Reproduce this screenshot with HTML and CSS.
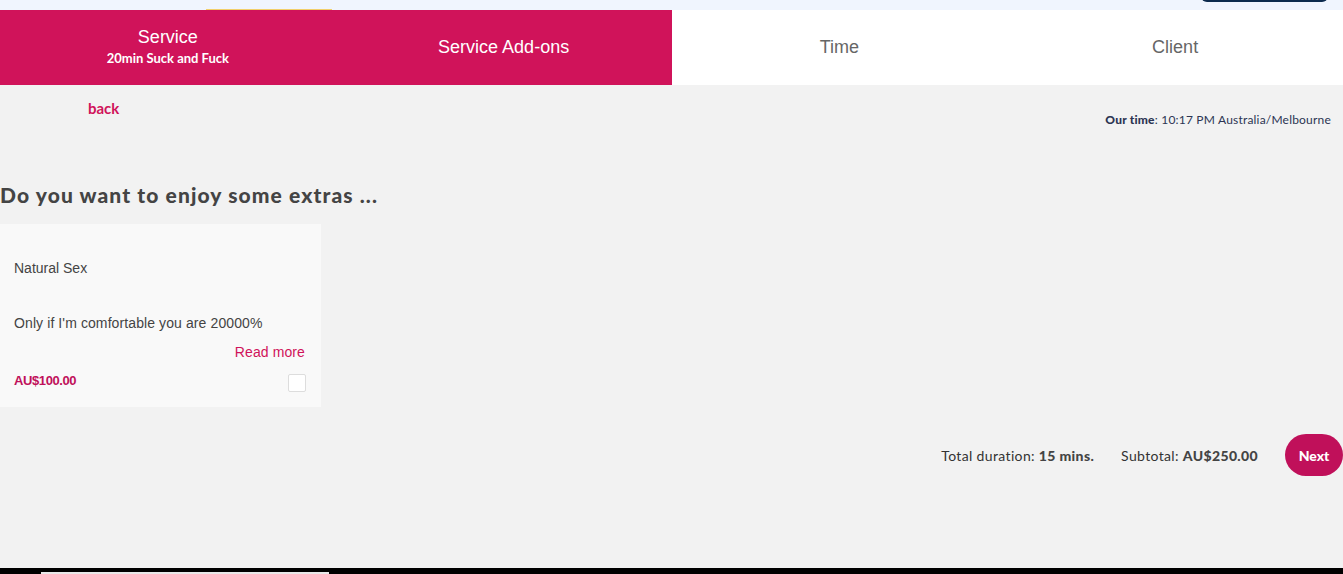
FILE: index.html
```html
<!DOCTYPE html>
<html>
<head>
<meta charset="utf-8">
<link rel="stylesheet" href="styles.css">
</head>
<body>
<div class="page">
  <div class="topbar">
    <div class="topbar-accent"></div>
    <div class="topbar-btn"></div>
  </div>
  <nav class="tabs">
    <div class="tab active">
      <span class="tab-title">Service</span>
      <span class="tab-sub">20min Suck and Fuck</span>
    </div>
    <div class="tab active"><span class="tab-title single">Service Add-ons</span></div>
    <div class="tab"><span class="tab-title single">Time</span></div>
    <div class="tab"><span class="tab-title single">Client</span></div>
  </nav>
  <main class="main">
    <div class="meta-row">
      <a class="back" href="#">back</a>
      <div class="our-time"><b>Our time</b>: 10:17 PM Australia/Melbourne</div>
    </div>
    <h2 class="heading">Do you want to enjoy some extras ...</h2>
    <div class="card">
      <div class="card-name">Natural Sex</div>
      <div class="card-desc">Only if I'm comfortable you are 20000%</div>
      <a class="read-more" href="#">Read more</a>
      <div class="card-foot">
        <span class="price">AU$100.00</span>
        <span class="checkbox"></span>
      </div>
    </div>
    <div class="summary">
      <span class="sum-item">Total duration: <b>15 mins.</b></span>
      <span class="sum-item">Subtotal: <b>AU$250.00</b></span>
      <button class="next">Next</button>
    </div>
  </main>
  <div class="bottombar"><div class="bottombar-tab"></div></div>
</div>
</body>
</html>
```

FILE: styles.css
```css
* { box-sizing: border-box; }
html, body { margin: 0; padding: 0; }
body {
  background: #f2f2f2;
  font-family: "Liberation Sans", Arial, sans-serif;
  overflow: hidden;
}
.page {
  height: 574px;
  display: flex;
  flex-direction: column;
}
.topbar {
  height: 10px;
  background: #f0f5fe;
  position: relative;
  flex: none;
}
.topbar-accent {
  position: absolute;
  left: 206px;
  width: 126px;
  bottom: 0;
  height: 1px;
  background: #f2cf6a;
}
.topbar-btn {
  position: absolute;
  left: 1201px;
  width: 127px;
  top: -10px;
  height: 12px;
  background: #0d2b4e;
  border-radius: 0 0 6px 6px;
}
.tabs {
  display: grid;
  grid-template-columns: repeat(4, 1fr);
  height: 75px;
  background: #fff;
  flex: none;
}
.tab {
  display: flex;
  flex-direction: column;
  align-items: center;
  justify-content: center;
  color: #666;
}
.tab.active {
  background: #d0135a;
  color: #fff;
}
.tab-title {
  font-size: 18px;
  line-height: 20px;
}
.tab-title.single {
  margin-bottom: 2px;
}
.tab-sub {
  font-family: Lato, sans-serif;
  font-weight: 700;
  font-size: 13px;
  line-height: 16px;
  margin-top: 3px;
  margin-bottom: 2px;
}
.main {
  flex: 1;
  display: flex;
  flex-direction: column;
}
.meta-row {
  display: flex;
  justify-content: space-between;
  align-items: flex-start;
  padding: 14px 12px 0 88px;
  height: 97px;
}
.back {
  font-family: Lato, sans-serif;
  font-weight: 700;
  font-size: 15px;
  line-height: 18px;
  color: #d0135a;
  text-decoration: none;
}
.our-time {
  font-family: Lato, sans-serif;
  font-size: 12px;
  line-height: 14px;
  color: #2c3553;
  margin-top: 14px;
  letter-spacing: 0.2px;
}
.our-time b { font-weight: 900; }
.heading {
  margin: 0;
  font-family: Lato, sans-serif;
  font-weight: 900;
  font-size: 21px;
  line-height: 26px;
  color: #444;
  letter-spacing: 1.1px;
}
.card {
  margin-top: 16px;
  width: 321px;
  height: 183px;
  background: #f9f9f9;
  padding: 36px 16px 0 14px;
  display: flex;
  flex-direction: column;
  color: #444;
  font-size: 14px;
}
.card-name { line-height: 16px; }
.card-desc { line-height: 16px; margin-top: 39px; letter-spacing: 0.1px; }
.read-more {
  align-self: flex-end;
  margin-top: 13px;
  color: #d0135a;
  font-size: 14px;
  line-height: 16px;
  text-decoration: none;
  letter-spacing: 0.1px;
}
.card-foot {
  display: flex;
  justify-content: space-between;
  align-items: flex-start;
  margin-top: 5px;
}
.price {
  color: #c0105a;
  font-weight: 700;
  font-size: 13px;
  line-height: 16px;
  letter-spacing: -0.4px;
  margin-top: 8px;
}
.checkbox {
  width: 18px;
  height: 18px;
  background: #fff;
  border: 1px solid #ddd;
  border-radius: 2px;
  margin-top: 9px;
  margin-right: -1px;
}
.summary {
  display: flex;
  justify-content: flex-end;
  align-items: center;
  margin-top: 27px;
  font-family: Lato, sans-serif;
  font-size: 14px;
  color: #333;
  letter-spacing: 0.35px;
}
.sum-item { margin-right: 27px; }
.sum-item b { font-weight: 900; color: #444; }
.next {
  width: 58px;
  height: 42px;
  border: none;
  border-radius: 21px;
  background: #c0105a;
  color: #fff;
  font-family: Lato, sans-serif;
  font-weight: 900;
  font-size: 14px;
  padding: 0;
}
.bottombar {
  height: 6px;
  background: #000;
  flex: none;
  display: flex;
  align-items: flex-end;
  padding-left: 41px;
}
.bottombar-tab {
  width: 288px;
  height: 2px;
  background: #e8e8e8;
}
```
